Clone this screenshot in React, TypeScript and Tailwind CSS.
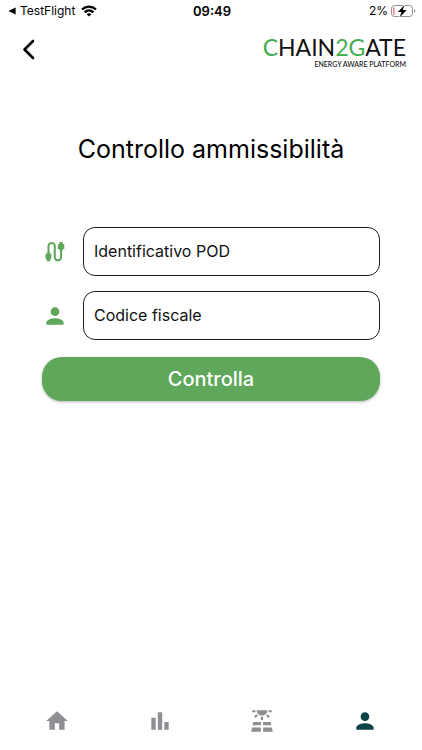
import { useState } from 'react'
import type { ReactNode } from 'react'
import { MdBarChart, MdHome, MdPerson, MdSolarPower } from 'react-icons/md'

function StatusBar() {
  return (
    <div className="grid grid-cols-3 items-center h-[22px] pl-2 pr-[6px] text-[12px] leading-none">
      <div className="flex items-center gap-1">
        <svg viewBox="0 0 8 8" className="w-2 h-2" fill="currentColor">
          <path d="M7.6.4v7.2L.4 4z" />
        </svg>
        <span>TestFlight</span>
        <svg viewBox="0 0 16 12" className="ml-[2px] w-4 h-3" fill="none" stroke="currentColor" strokeWidth="2.3">
          <path d="M1 4.5C5 .7 11 .7 15 4.5" />
          <path d="M3.6 7.3c2.6-2.4 6.2-2.4 8.8 0" />
          <path d="M8 11.6 5.6 9.2c1.4-1.2 3.4-1.2 4.8 0z" fill="currentColor" stroke="none" />
        </svg>
      </div>
      <span className="text-center text-[13px] font-semibold">09:49</span>
      <div className="flex items-center justify-end gap-[3px]">
        <span>2%</span>
        <svg viewBox="0 0 25 14" className="w-[25px] h-[14px]">
          <rect x=".5" y="1.5" width="21" height="11" rx="3" fill="#fff" stroke="#8f8f8f" />
          <path d="M2 4.5Q2 3 3.6 3v8Q2 11 2 9.5z" fill="#f0868c" />
          <path d="M23 5.2q1.4.6 1.4 1.8T23 8.8z" fill="#8f8f8f" />
          <path d="M13.5 1 6.8 8h3.700l-1.8 5.2L15.8 6h-4z" stroke="#fff" strokeWidth="1.2" paintOrder="stroke" fill="#000" />
        </svg>
      </div>
    </div>
  )
}

function Logo() {
  return (
    <div className="flex flex-col items-end pt-[2px] font-['Lato',sans-serif] text-[#111]">
      <span className="text-[23px] leading-[26px]">
        <span className="text-[#43ad50]">C</span>HAIN<span className="text-[#43ad50]">2G</span>ATE
      </span>
      <span className="text-[7px] leading-[8px] font-medium">ENERGY AWARE PLATFORM</span>
    </div>
  )
}

function CableIcon() {
  return (
    <svg viewBox="0 0 24 24" className="w-[26px] h-[26px]" fill="none" stroke="currentColor" strokeWidth="1.9">
      <path d="M6 14V6.600a2.900 2.900 0 0 1 5.800 0v10.200a2.900 2.900 0 0 0 5.800 0V9" />
      <path
        d="M4.600 12.500h2.800v1.200h1.200v4.200L7.600 19v1.600H4.400V19l-1.200-1.100v-4.200h1.400zM16.200 2.800h2.800v1.400l1.600 1.200v3.800h-1.400v1.400h-3.200V9.200h-1.400V5.400l1.600-1.200z"
        fill="currentColor"
        stroke="none"
      />
    </svg>
  )
}

type FieldProps = {
  id: string
  label: string
  icon: ReactNode
  value: string
  onChange: (value: string) => void
}

function Field({ id, label, icon, value, onChange }: FieldProps) {
  return (
    <div className="flex items-center gap-[15px]">
      <label htmlFor={id} aria-label={label} className="shrink-0 text-[#5fa75a]">
        {icon}
      </label>
      <input
        id={id}
        type="text"
        placeholder={label}
        value={value}
        onChange={(e) => onChange(e.target.value)}
        className="min-w-0 flex-1 h-[49px] px-[10px] pb-[2px] rounded-xl border border-[#1c1c1c] text-[16px] placeholder:text-[#111] focus:outline-none"
      />
    </div>
  )
}

const TABS = [
  { id: 'home', label: 'Home', icon: MdHome },
  { id: 'consumi', label: 'Consumi', icon: MdBarChart },
  { id: 'fotovoltaico', label: 'Fotovoltaico', icon: MdSolarPower },
  { id: 'profilo', label: 'Profilo', icon: MdPerson },
]

export default function App() {
  const [pod, setPod] = useState('')
  const [fiscalCode, setFiscalCode] = useState('')
  const [tab, setTab] = useState('profilo')

  return (
    <div className="flex flex-col min-h-screen bg-white text-black font-['Inter',sans-serif]">
      <StatusBar />

      <header className="flex items-center justify-between h-[56px] px-4">
        <button type="button" aria-label="Indietro" className="p-1">
          <svg
            viewBox="0 0 18 24"
            className="w-[18px] h-6"
            fill="none"
            stroke="currentColor"
            strokeWidth="2.6"
            strokeLinecap="round"
            strokeLinejoin="round"
          >
            <path d="M13 3 4.500 11.500 13 20" />
          </svg>
        </button>
        <Logo />
      </header>

      <main className="flex-1 px-[42px] pt-[52px]">
        <h1 className="text-center text-[25px] leading-[38px]">Controllo ammissibilità</h1>

        <form className="mt-[59px] flex flex-col" onSubmit={(e) => e.preventDefault()}>
          <div className="flex flex-col gap-[15px]">
            <Field id="pod" label="Identificativo POD" icon={<CableIcon />} value={pod} onChange={setPod} />
            <Field
              id="codice-fiscale"
              label="Codice fiscale"
              icon={<MdPerson className="w-[26px] h-[26px]" />}
              value={fiscalCode}
              onChange={setFiscalCode}
            />
          </div>
          <button
            type="submit"
            className="mt-[17px] h-[44px] rounded-[20px] bg-[#5fa75a] text-white text-[20px] font-medium shadow-[0_1px_3px_rgba(0,0,0,0.3)]"
          >
            Controlla
          </button>
        </form>
      </main>

      <nav className="grid grid-cols-4 h-[58px] px-[6px]">
        {TABS.map(({ id, label, icon: Icon }) => (
          <button
            key={id}
            type="button"
            aria-label={label}
            onClick={() => setTab(id)}
            className={`flex items-center justify-center ${tab === id ? 'text-[#0b4347]' : 'text-[#8e8e93]'}`}
          >
            <Icon className="w-[26px] h-[26px]" />
          </button>
        ))}
      </nav>
    </div>
  )
}
